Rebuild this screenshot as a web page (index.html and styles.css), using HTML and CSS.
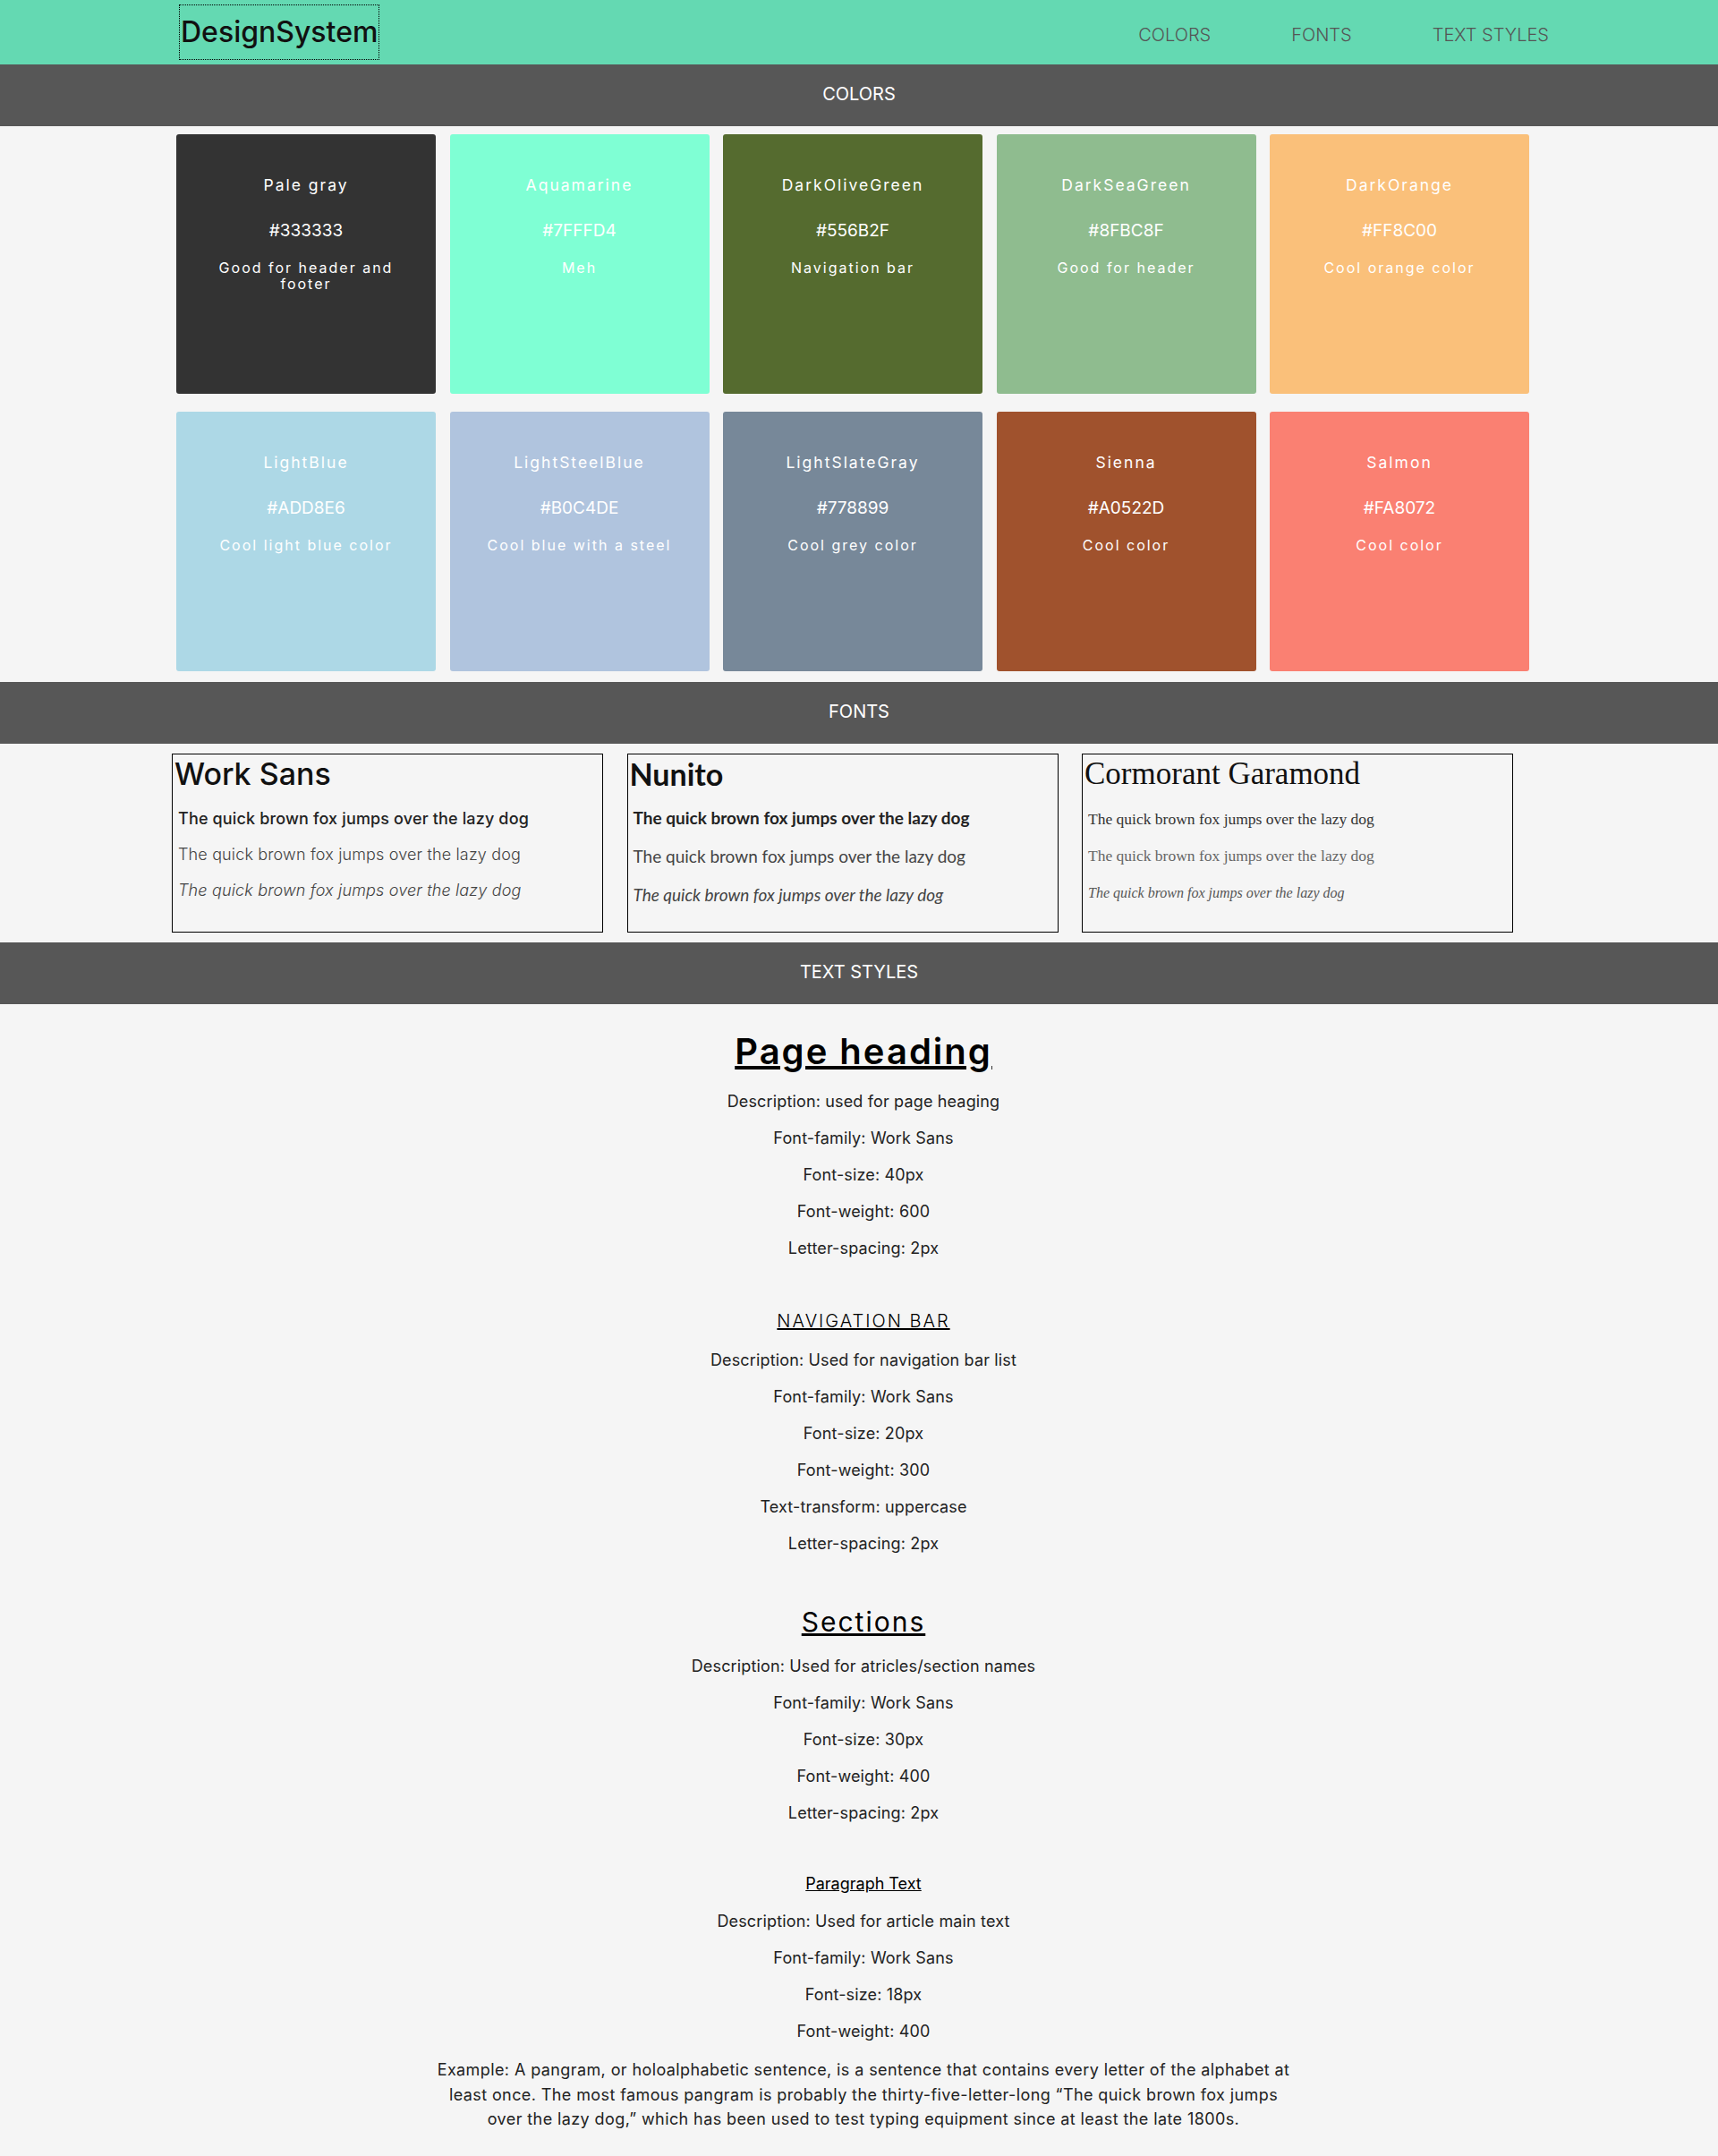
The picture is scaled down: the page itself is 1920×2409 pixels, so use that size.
FILE: index.html
```html
<!DOCTYPE html>
<html lang="en">

<head>
    <meta charset="UTF-8">
    <meta name="viewport" content="width=device-width, initial-scale=1.0">
    <title>Design System</title>
    <link rel="stylesheet" href="styles.css">
</head>

<body>
    <header class="topbar">
        <div class="topbar-inner">
            <a class="logo" href="#">DesignSystem</a>
            <nav class="nav">
                <a href="#colors">Colors</a>
                <a href="#fonts">Fonts</a>
                <a href="#text-styles">Text styles</a>
            </nav>
        </div>
    </header>

    <section id="colors">
        <h2 class="band">COLORS</h2>
        <div class="swatches">
            <div class="swatch pale-gray">
                <h3>Pale gray</h3>
                <p class="hex">#333333</p>
                <p class="note">Good for header and footer</p>
            </div>
            <div class="swatch aquamarine">
                <h3>Aquamarine</h3>
                <p class="hex">#7FFFD4</p>
                <p class="note">Meh</p>
            </div>
            <div class="swatch olive">
                <h3>DarkOliveGreen</h3>
                <p class="hex">#556B2F</p>
                <p class="note">Navigation bar</p>
            </div>
            <div class="swatch sea-green">
                <h3>DarkSeaGreen</h3>
                <p class="hex">#8FBC8F</p>
                <p class="note">Good for header</p>
            </div>
            <div class="swatch orange">
                <h3>DarkOrange</h3>
                <p class="hex">#FF8C00</p>
                <p class="note">Cool orange color</p>
            </div>
            <div class="swatch light-blue">
                <h3>LightBlue</h3>
                <p class="hex">#ADD8E6</p>
                <p class="note">Cool light blue color</p>
            </div>
            <div class="swatch steel-blue">
                <h3>LightSteelBlue</h3>
                <p class="hex">#B0C4DE</p>
                <p class="note">Cool blue with a steel</p>
            </div>
            <div class="swatch slate-gray">
                <h3>LightSlateGray</h3>
                <p class="hex">#778899</p>
                <p class="note">Cool grey color</p>
            </div>
            <div class="swatch sienna">
                <h3>Sienna</h3>
                <p class="hex">#A0522D</p>
                <p class="note">Cool color</p>
            </div>
            <div class="swatch salmon">
                <h3>Salmon</h3>
                <p class="hex">#FA8072</p>
                <p class="note">Cool color</p>
            </div>
        </div>
    </section>

    <section id="fonts">
        <h2 class="band">FONTS</h2>
        <div class="font-list">
            <div class="font-card work-sans">
                <h2>Work Sans</h2>
                <p class="strong">The quick brown fox jumps over the lazy dog</p>
                <p class="light">The quick brown fox jumps over the lazy dog</p>
                <p class="italic">The quick brown fox jumps over the lazy dog</p>
            </div>
            <div class="font-card nunito">
                <h2>Nunito</h2>
                <p class="strong">The quick brown fox jumps over the lazy dog</p>
                <p class="light">The quick brown fox jumps over the lazy dog</p>
                <p class="italic">The quick brown fox jumps over the lazy dog</p>
            </div>
            <div class="font-card cormorant">
                <h2>Cormorant Garamond</h2>
                <p class="strong">The quick brown fox jumps over the lazy dog</p>
                <p class="light">The quick brown fox jumps over the lazy dog</p>
                <p class="italic">The quick brown fox jumps over the lazy dog</p>
            </div>
        </div>
    </section>

    <section id="text-styles">
        <h2 class="band">TEXT STYLES</h2>
        <div class="styles">
            <div class="style-block">
                <h1 class="page-heading">Page heading</h1>
                <p>Description: used for page heaging</p>
                <p>Font-family: Work Sans</p>
                <p>Font-size: 40px</p>
                <p>Font-weight: 600</p>
                <p>Letter-spacing: 2px</p>
            </div>
            <div class="style-block">
                <h2 class="nav-heading">Navigation bar</h2>
                <p>Description: Used for navigation bar list</p>
                <p>Font-family: Work Sans</p>
                <p>Font-size: 20px</p>
                <p>Font-weight: 300</p>
                <p>Text-transform: uppercase</p>
                <p>Letter-spacing: 2px</p>
            </div>
            <div class="style-block">
                <h2 class="section-heading">Sections</h2>
                <p>Description: Used for atricles/section names</p>
                <p>Font-family: Work Sans</p>
                <p>Font-size: 30px</p>
                <p>Font-weight: 400</p>
                <p>Letter-spacing: 2px</p>
            </div>
            <div class="style-block">
                <h3 class="paragraph-heading">Paragraph Text</h3>
                <p>Description: Used for article main text</p>
                <p>Font-family: Work Sans</p>
                <p>Font-size: 18px</p>
                <p>Font-weight: 400</p>
                <p class="example">Example: A pangram, or holoalphabetic sentence, is a sentence that contains every letter of the alphabet at least once. The most famous pangram is probably the thirty-five-letter-long “The quick brown fox jumps over the lazy dog,” which has been used to test typing equipment since at least the late 1800s.</p>
            </div>
        </div>
    </section>
</body>

</html>
```

FILE: styles.css
```css
/* Design system page */
body {
    margin: 0;
    font-family: Inter, "Open Sans", sans-serif;
    background-color: #f5f5f5;
    color: #111;
}

/* Top bar */
.topbar {
    height: 72px;
    background-color: #64d9b2;
}

.topbar-inner {
    width: 1536px;
    height: 100%;
    margin: 0 auto;
    display: flex;
    align-items: center;
    justify-content: space-between;
}

.logo {
    margin-left: 8px;
    padding: 12px 1px;
    border: 1px dotted #000;
    font-size: 32px;
    line-height: 36px;
    font-weight: 500;
    color: #111;
    text-decoration: none;
}

.nav {
    display: flex;
    gap: 90px;
    margin-top: 6px;
    margin-right: -3px;
}

.nav a {
    font-size: 20px;
    line-height: 24px;
    font-weight: 300;
    color: #555;
    text-decoration: none;
    text-transform: uppercase;
}

/* Section bands */
.band {
    margin: 0;
    height: 69px;
    padding-bottom: 4px;
    box-sizing: border-box;
    display: flex;
    align-items: center;
    justify-content: center;
    background-color: #575757;
    color: #fff;
    font-size: 20px;
    font-weight: 400;
}

/* Colors */
.swatches {
    width: 1536px;
    margin: 9px auto 12px;
    padding-left: 5px;
    box-sizing: border-box;
    display: flex;
    flex-wrap: wrap;
    gap: 20px 15.5px;
}

.swatch {
    width: 290px;
    height: 290px;
    box-sizing: border-box;
    padding: 47px 30px 0;
    border-radius: 3px;
    text-align: center;
    color: #fff;
}

.swatch h3 {
    margin: 0 0 29px;
    font-size: 17.5px;
    line-height: 20px;
    font-weight: 400;
    letter-spacing: 2px;
}

.swatch .hex {
    margin: 0 0 21px;
    font-size: 19px;
    line-height: 23px;
}

.swatch .note {
    margin: 0;
    font-size: 16px;
    line-height: 18px;
    letter-spacing: 2px;
}

.pale-gray { background-color: #333333; }
.aquamarine { background-color: #7fffd4; }
.olive { background-color: #556b2f; }
.sea-green { background-color: #8fbc8f; }
.orange { background-color: #fac07a; }
.light-blue { background-color: #add8e6; }
.steel-blue { background-color: #b0c4de; }
.slate-gray { background-color: #778899; }
.sienna { background-color: #a0522d; }
.salmon { background-color: #fa8072; }

/* Fonts */
.font-list {
    width: 1536px;
    margin: 11px auto;
    display: flex;
    gap: 26.5px;
}

.font-card {
    width: 482px;
    height: 200px;
    box-sizing: border-box;
    padding: 2px 2px 0;
    border: 1px solid #000;
}

.font-card h2 {
    margin: 0 0 10px;
    font-size: 34px;
    line-height: 40px;
    font-weight: 500;
    color: #111;
}

.font-card p {
    margin: 0;
    padding-left: 4px;
    font-size: 18px;
    line-height: 40px;
    letter-spacing: 0.15px;
    color: #444;
}

.font-card .strong {
    font-weight: 500;
    color: #222;
}

.font-card .light {
    font-weight: 300;
}

.font-card .italic {
    font-weight: 300;
    font-style: italic;
}

.nunito {
    font-family: Lato, sans-serif;
}

.nunito h2 {
    margin-bottom: 7px;
    font-size: 34px;
    font-weight: 700;
}

.nunito p {
    font-size: 19px;
    line-height: 43px;
    letter-spacing: 0;
}

.nunito .strong {
    font-weight: 700;
}

.nunito .light,
.nunito .italic {
    font-weight: 400;
}

.cormorant {
    font-family: "Liberation Serif", serif;
}

.cormorant h2 {
    font-size: 35px;
    font-weight: 400;
}

.cormorant p {
    font-size: 17.5px;
    line-height: 41px;
    letter-spacing: 0;
}

.cormorant .strong {
    font-weight: 400;
    color: #333;
}

.cormorant .light {
    font-weight: 400;
    color: #666;
}

.cormorant .italic {
    font-size: 16px;
    font-weight: 400;
    color: #555;
}

/* Text styles */
.styles {
    padding: 29px 0 36px 10px;
    text-align: center;
}

.style-block h1,
.style-block h2,
.style-block h3 {
    margin: 0 0 11px;
    color: #000;
    text-decoration: underline;
}

.style-block + .style-block {
    margin-top: 49px;
}

.page-heading {
    font-size: 40px;
    line-height: 48px;
    font-weight: 600;
    letter-spacing: 2px;
}

.nav-heading {
    font-size: 20px;
    line-height: 24px;
    font-weight: 300;
    letter-spacing: 2px;
    text-transform: uppercase;
}

.section-heading {
    font-size: 30px;
    line-height: 36px;
    font-weight: 400;
    letter-spacing: 2px;
}

.paragraph-heading {
    font-size: 18px;
    line-height: 20px;
    font-weight: 400;
}

.style-block p {
    margin: 0;
    font-size: 18px;
    line-height: 41px;
    letter-spacing: 0.15px;
    color: #222;
}

.style-block .example {
    max-width: 960px;
    margin: 9px auto 0;
    line-height: 27.5px;
    letter-spacing: 0.4px;
}
```
